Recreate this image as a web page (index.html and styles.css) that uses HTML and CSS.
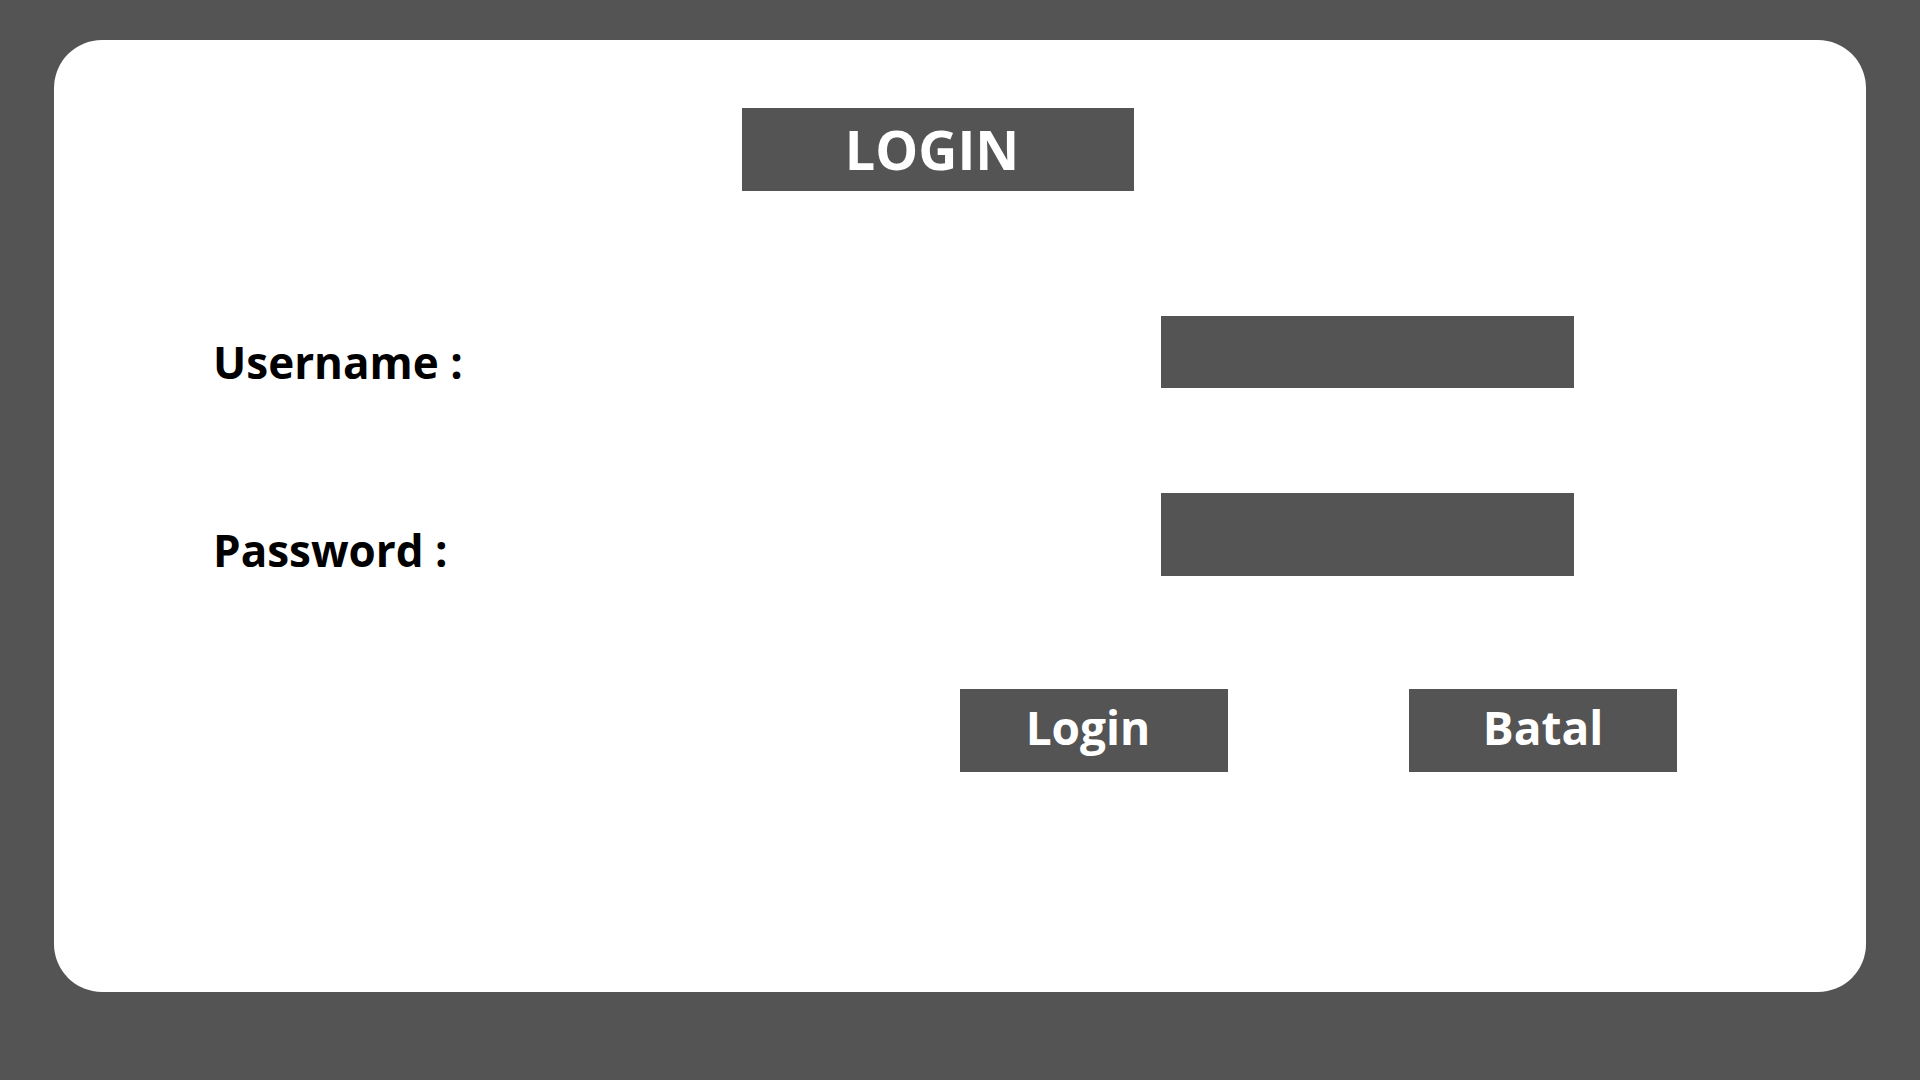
FILE: index.html
```html
<!DOCTYPE html>
<html lang="id">
<head>
  <meta charset="utf-8">
  <meta name="viewport" content="width=device-width, initial-scale=1">
  <title>Login</title>
  <link rel="stylesheet" href="styles.css">
</head>
<body class="page">
  <main class="card">
    <header class="card-header">
      <h1 class="title">LOGIN</h1>
    </header>
    <form class="form">
      <div class="field">
        <label class="label" for="username">Username :</label>
        <input class="input" id="username" name="username" type="text" autocomplete="username">
      </div>
      <div class="field">
        <label class="label" for="password">Password :</label>
        <input class="input input-tall" id="password" name="password" type="password" autocomplete="current-password">
      </div>
      <div class="actions">
        <button class="button button-login" type="submit">Login</button>
        <button class="button" type="reset">Batal</button>
      </div>
    </form>
  </main>
</body>
</html>
```
FILE: styles.css
```css
*,
*::before,
*::after {
  box-sizing: border-box;
}

.page {
  display: flex;
  min-height: 100vh;
  margin: 0;
  padding: 40px 54px 88px;
  background: #545454;
  color: #000;
  font-family: "Open Sans", "Noto Sans", sans-serif;
  font-weight: 700;
}

.card {
  flex: 1;
  min-width: 0;
  padding: 68px 0;
  border-radius: 48px;
  background: #fff;
}

.card-header {
  display: flex;
  justify-content: center;
  padding-right: 44px;
}

.title {
  width: 392px;
  margin: 0;
  padding-right: 12px;
  background: #545454;
  color: #fff;
  font-size: 54px;
  line-height: 83px;
  text-align: center;
}

.form {
  display: flex;
  flex-direction: column;
  gap: 105px;
  padding-top: 125px;
}

.field {
  display: flex;
  align-items: flex-end;
  justify-content: space-between;
  padding: 0 292px 0 159px;
}

.label {
  font-size: 44px;
  line-height: 52px;
}

.input {
  width: 413px;
  height: 72px;
  padding: 0 16px;
  border: 0;
  border-radius: 0;
  background: #545454;
  color: #fff;
  font: inherit;
  font-size: 32px;
}

.input-tall {
  height: 83px;
}

.actions {
  display: flex;
  justify-content: flex-end;
  gap: 181px;
  padding: 8px 189px 0 0;
}

.button {
  width: 268px;
  height: 83px;
  padding: 0 0 8px;
  border: 0;
  background: #545454;
  color: #fff;
  font: inherit;
  font-size: 46px;
  cursor: pointer;
}

.button-login {
  padding-right: 12px;
}
```
